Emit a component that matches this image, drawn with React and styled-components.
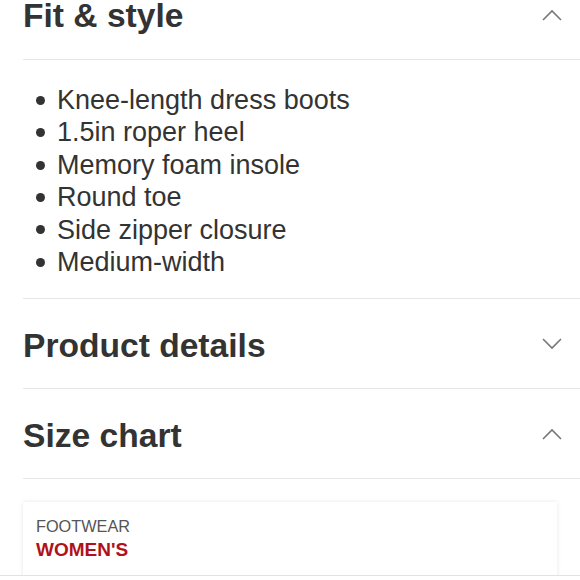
import React from "react"
import styled, { createGlobalStyle } from "styled-components"

const GlobalStyle = createGlobalStyle`
  body {
    margin: 0;
    background: #fff;
    font-family: "Liberation Sans", Arial, Helvetica, sans-serif;
    color: #333;
    overflow: hidden;
  }
`

const Page = styled.div`
  margin-top: -30px;
  padding-left: 23px;
`

const SectionHeader = styled.div`
  display: flex;
  align-items: center;
  justify-content: space-between;
  height: 89px;
  border-bottom: 1px solid #e6e6e6;
  padding-right: 18px;
`

const Title = styled.h2`
  margin: 0;
  padding-top: 3px;
  font-size: 33.6px;
  line-height: 1;
  font-weight: 700;
  color: #333;
`

const Chevron = styled.svg`
  width: 20px;
  height: 12px;
  display: block;
`

const BulletList = styled.ul`
  list-style: none;
  margin: 0;
  padding: 24px 0 20px 0;
  border-bottom: 1px solid #e6e6e6;
`

const Bullet = styled.li`
  display: flex;
  align-items: center;
  font-size: 27px;
  line-height: 32.4px;
  color: #333;

  &::before {
    content: "";
    width: 9px;
    height: 9px;
    border-radius: 50%;
    background: #333;
    margin-left: 13px;
    margin-right: 12px;
    flex-shrink: 0;
  }
`

const Card = styled.div`
  margin: 23px 23px 0 0;
  padding: 14px 13px 40px;
  background: #fff;
  box-shadow: 0 0 4px rgba(0, 0, 0, 0.1);
`

const Category = styled.div`
  font-size: 16.3px;
  line-height: 20px;
  color: #555;
`

const Gender = styled.div`
  margin-top: 4px;
  font-size: 19px;
  line-height: 20px;
  font-weight: 700;
  color: #b0121b;
`

const BottomBar = styled.div`
  position: fixed;
  left: 0;
  right: 0;
  top: 575px;
  height: 10px;
  background: #fff;
  border-top: 1px solid #e2e2e2;
`

const ChevronIcon = ({ up }) => (
  <Chevron viewBox="0 0 20 12" fill="none">
    <path
      d={up ? "M1 11 L10 2 L19 11" : "M1 1 L10 10 L19 1"}
      stroke="#777"
      strokeWidth="1.6"
    />
  </Chevron>
)

const features = [
  "Knee-length dress boots",
  "1.5in roper heel",
  "Memory foam insole",
  "Round toe",
  "Side zipper closure",
  "Medium-width",
]

const App = () => {
  return (
    <>
      <GlobalStyle />
      <Page>
        <SectionHeader>
          <Title>Fit &amp; style</Title>
          <ChevronIcon up />
        </SectionHeader>
        <BulletList>
          {features.map(f => (
            <Bullet key={f}>{f}</Bullet>
          ))}
        </BulletList>

        <SectionHeader>
          <Title>Product details</Title>
          <ChevronIcon />
        </SectionHeader>

        <SectionHeader>
          <Title>Size chart</Title>
          <ChevronIcon up />
        </SectionHeader>

        <Card>
          <Category>FOOTWEAR</Category>
          <Gender>WOMEN'S</Gender>
        </Card>
      </Page>
      <BottomBar />
    </>
  )
}

export default App
